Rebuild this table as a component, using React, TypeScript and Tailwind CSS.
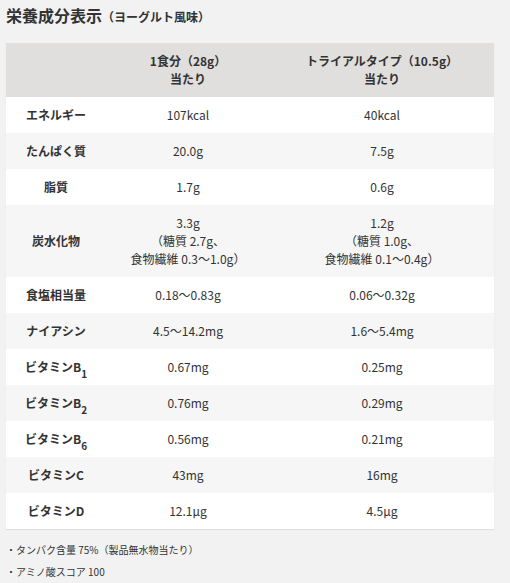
import React from "react";

type Row = { label: React.ReactNode; a: React.ReactNode; b: React.ReactNode };

const Vit = ({ s }: { s: string }) => (
  <>
    ビタミンB<sub className="text-[10px] align-[-3px] leading-none">{s}</sub>
  </>
);

const rows: Row[] = [
  { label: "エネルギー", a: "107kcal", b: "40kcal" },
  { label: "たんぱく質", a: "20.0g", b: "7.5g" },
  { label: "脂質", a: "1.7g", b: "0.6g" },
  {
    label: "炭水化物",
    a: (
      <>
        3.3g
        <br />
        （糖質 2.7g、
        <br />
        食物繊維 0.3〜1.0g）
      </>
    ),
    b: (
      <>
        1.2g
        <br />
        （糖質 1.0g、
        <br />
        食物繊維 0.1〜0.4g）
      </>
    ),
  },
  { label: "食塩相当量", a: "0.18〜0.83g", b: "0.06〜0.32g" },
  { label: "ナイアシン", a: "4.5〜14.2mg", b: "1.6〜5.4mg" },
  { label: <Vit s="1" />, a: "0.67mg", b: "0.25mg" },
  { label: <Vit s="2" />, a: "0.76mg", b: "0.29mg" },
  { label: <Vit s="6" />, a: "0.56mg", b: "0.21mg" },
  { label: "ビタミンC", a: "43mg", b: "16mg" },
  { label: "ビタミンD", a: "12.1μg", b: "4.5μg" },
];

export default function App() {
  return (
    <div
      className="w-[510px] h-[583px] bg-[#f2f2f2] px-[6px] pt-[3px] text-[#333]"
      style={{ fontFamily: '"Noto Sans CJK JP", "Noto Sans", sans-serif' }}
    >
      <h2 className="text-[16px] font-bold leading-[24px]">
        栄養成分表示<span className="text-[12px]">（ヨーグルト風味）</span>
      </h2>
      <table className="mt-[14px] w-[488px] table-fixed border-collapse text-[12px] leading-[18px] shadow-[0_1px_1px_rgba(0,0,0,0.08)]">
        <colgroup>
          <col className="w-[100px]" />
          <col className="w-[164px]" />
          <col className="w-[224px]" />
        </colgroup>
        <thead>
          <tr className="bg-[#e0dfdd]">
            <th className="py-[9px]"></th>
            <th className="py-[9px] font-bold text-center">
              1食分（28g）
              <br />
              当たり
            </th>
            <th className="py-[9px] font-bold text-center">
              トライアルタイプ（10.5g）
              <br />
              当たり
            </th>
          </tr>
        </thead>
        <tbody>
          {rows.map((r, i) => (
            <tr key={i} className={i % 2 === 0 ? "bg-white" : "bg-[#f6f6f6]"}>
              <th className="py-[9px] font-bold text-center align-middle">{r.label}</th>
              <td className="py-[9px] text-center align-middle">{r.a}</td>
              <td className="py-[9px] text-center align-middle">{r.b}</td>
            </tr>
          ))}
        </tbody>
      </table>
      <ul className="mt-[10px] text-[10px] leading-[22px]">
        <li>・タンパク含量 75%（製品無水物当たり）</li>
        <li>・アミノ酸スコア 100</li>
      </ul>
    </div>
  );
}
